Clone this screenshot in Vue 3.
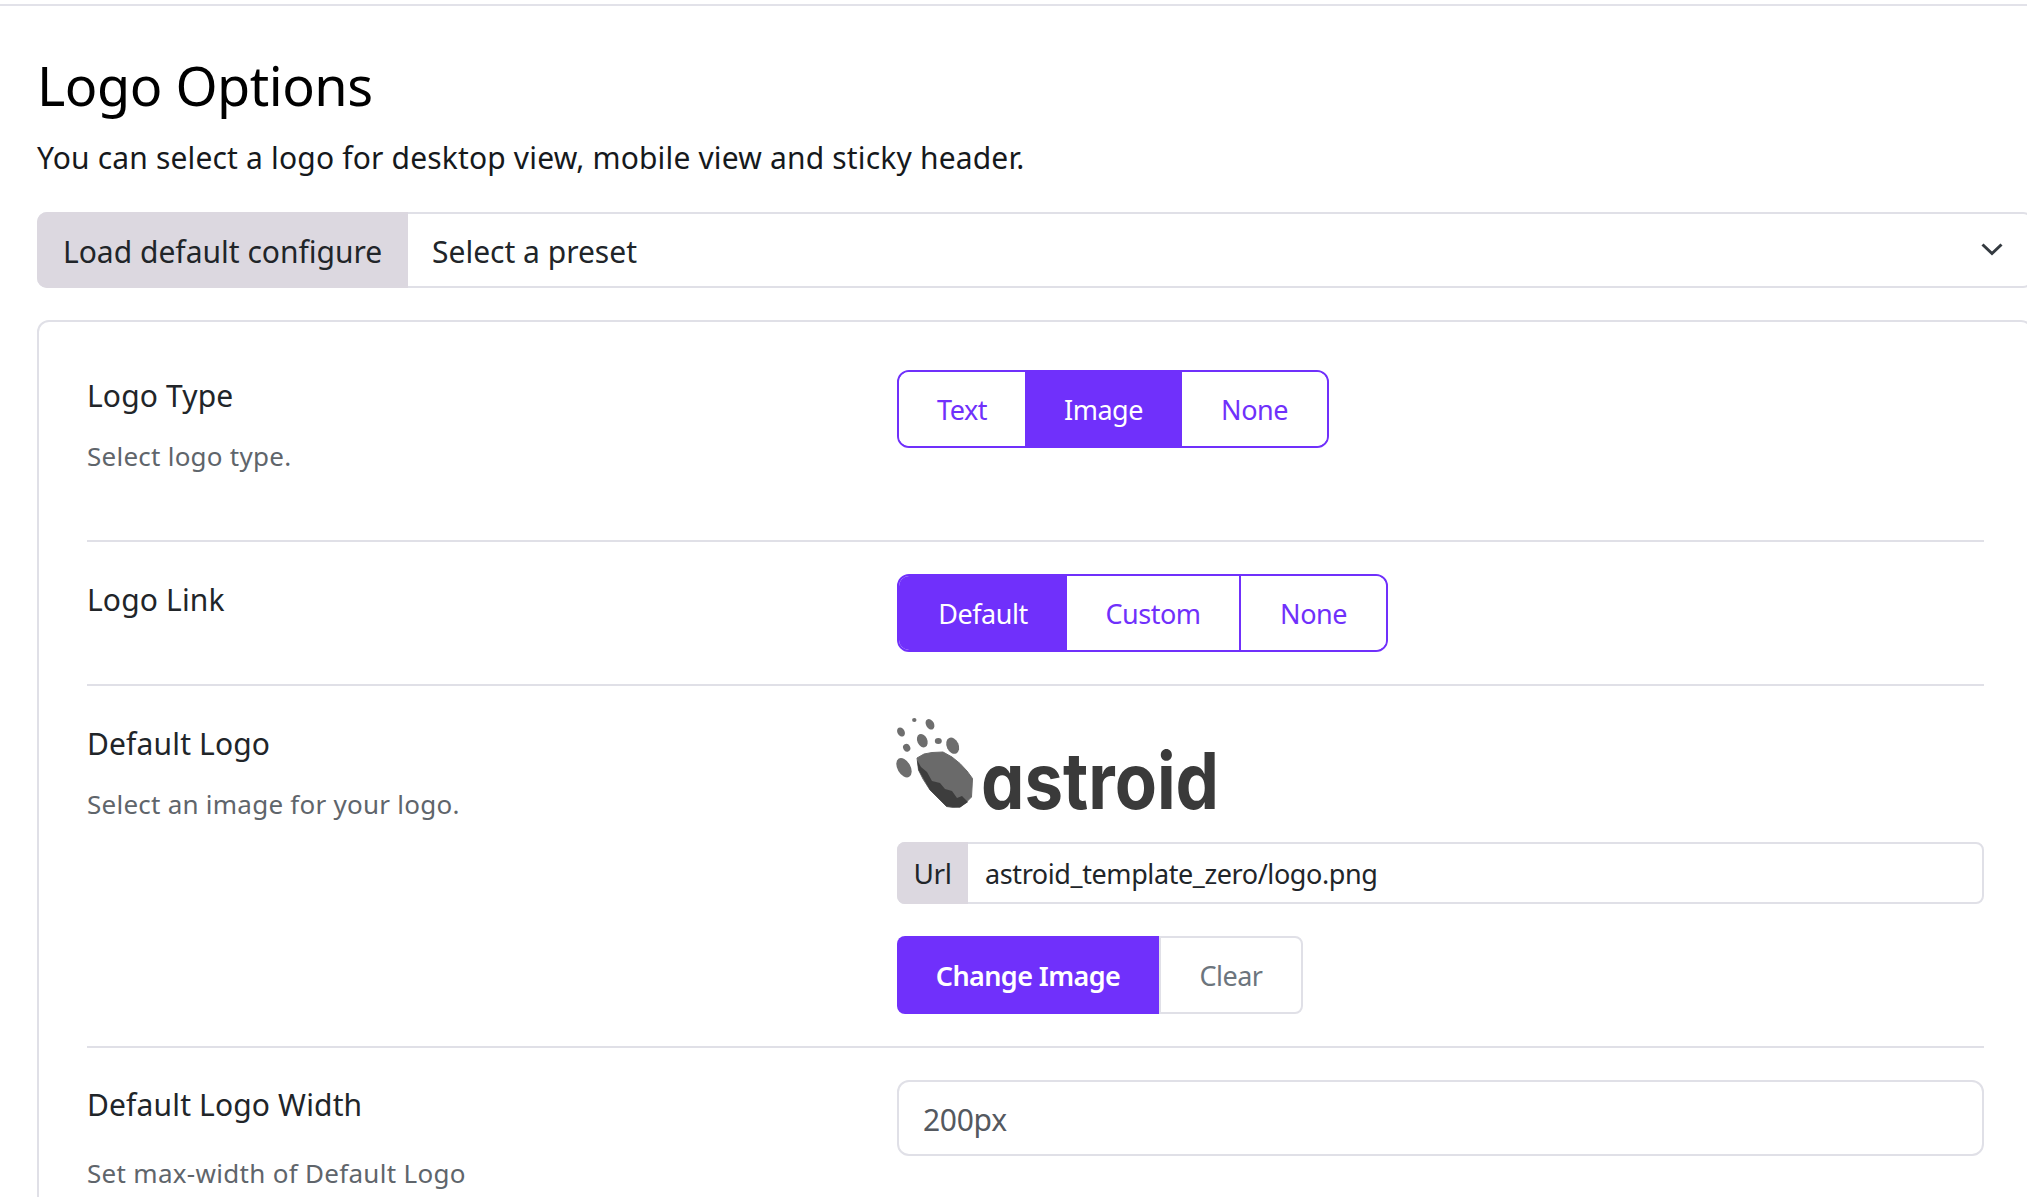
<script setup>
const typeOptions = [
  { label: 'Text', width: 126 },
  { label: 'Image', width: 157, active: true },
  { label: 'None', width: 145 },
]
const linkOptions = [
  { label: 'Default', width: 168, active: true },
  { label: 'Custom', width: 172 },
  { label: 'None', width: 147 },
]
</script>

<template>
  <div class="page">
    <h1 class="title">Logo Options</h1>
    <p class="subtitle">You can select a logo for desktop view, mobile view and sticky header.</p>

    <div class="preset">
      <span class="preset-label">Load default configure</span>
      <div class="preset-select">
        <span>Select a preset</span>
        <svg class="chevron" width="24" height="16" viewBox="0 0 24 16" fill="none">
          <path d="M2.5 3.5 12 12.5 21.5 3.5" stroke="#343a40" stroke-width="3" />
        </svg>
      </div>
    </div>

    <section class="card">
      <div class="row row-type">
        <div class="info">
          <h3 class="name">Logo Type</h3>
          <p class="desc">Select logo type.</p>
        </div>
        <div class="field">
          <div class="toggle">
            <button
              v-for="o in typeOptions"
              :key="o.label"
              class="toggle-btn"
              :class="{ on: o.active }"
              :style="{ width: o.width + 'px' }"
            >{{ o.label }}</button>
          </div>
        </div>
      </div>

      <div class="row row-link">
        <div class="info">
          <h3 class="name">Logo Link</h3>
        </div>
        <div class="field">
          <div class="toggle toggle-sep">
            <button
              v-for="o in linkOptions"
              :key="o.label"
              class="toggle-btn"
              :class="{ on: o.active }"
              :style="{ width: o.width + 'px' }"
            >{{ o.label }}</button>
          </div>
        </div>
      </div>

      <div class="row row-logo">
        <div class="info">
          <h3 class="name">Default Logo</h3>
          <p class="desc">Select an image for your logo.</p>
        </div>
        <div class="field">
          <svg class="logo" width="330" height="96" viewBox="0 0 330 96">
            <g class="logo-art">
              <g fill="#6e6e6e">
                <ellipse cx="5" cy="15" rx="3.6" ry="4.8" transform="rotate(-30 5 15)" />
                <ellipse cx="18.3" cy="3" rx="2.2" ry="2" />
                <ellipse cx="34" cy="7.3" rx="4" ry="5.6" transform="rotate(-30 34 7.3)" />
                <ellipse cx="26.3" cy="23.7" rx="5" ry="7" transform="rotate(-25 26.3 23.7)" />
                <ellipse cx="42.3" cy="24" rx="3.5" ry="3" />
                <ellipse cx="56.7" cy="28.7" rx="6" ry="8.5" transform="rotate(-25 56.7 28.7)" />
                <ellipse cx="10.7" cy="30.7" rx="3.5" ry="4" transform="rotate(-30 10.7 30.7)" />
                <ellipse cx="8" cy="50.7" rx="6.5" ry="10.5" transform="rotate(-30 8 50.7)" />
              </g>
              <path d="M28 37 36 35.5 47 35 56 40 64 46.5 71 54 76.5 61.5 76 71 75.5 80 70 85.5 64 90 57 90.5 50.5 89.5 42 81 34 73 27 62 22.5 53 21 41Z" fill="#6a6a6a" stroke="#6a6a6a" stroke-width="1" stroke-linejoin="round" />
              <path d="M21 43 22.5 53 34 73 50.5 89.5 64 90.5 72 85 66 79 61 81 56 74 49 72 44 66 36 64 31 55 25 50Z" fill="#3d3d3d" />
            </g>
            <text class="logo-text" x="85" y="92" textLength="238" lengthAdjust="spacingAndGlyphs">astroid</text>
          </svg>

          <div class="url">
            <span class="url-label">Url</span>
            <input class="url-input" value="astroid_template_zero/logo.png" />
          </div>

          <div class="actions">
            <button class="change">Change Image</button>
            <button class="clear">Clear</button>
          </div>
        </div>
      </div>

      <div class="row row-width">
        <div class="info">
          <h3 class="name">Default Logo Width</h3>
          <p class="desc desc-far">Set max-width of Default Logo</p>
        </div>
        <div class="field field-width">
          <input class="text-input" value="200px" />
        </div>
      </div>
    </section>
  </div>
</template>

<style scoped>
.page {
  box-sizing: border-box;
  width: 2027px;
  height: 1197px;
  overflow: hidden;
  padding: 4px 0 0 37px;
  position: relative;
  background: #fff;
  font-family: "Noto Sans", "Open Sans", sans-serif;
  color: #212529;
}
.page::before {
  content: "";
  position: absolute;
  left: 0;
  right: 0;
  top: 4px;
  height: 2px;
  background: #e2e2e9;
}
.title {
  margin: 44px 0 0;
  font-size: 54px;
  line-height: 74px;
  font-weight: 400;
  color: #000;
  letter-spacing: -0.5px;
}
.subtitle {
  margin: 14px 0 0;
  font-size: 30px;
  line-height: 44px;
  color: #16191c;
  letter-spacing: 0.17px;
}
.preset {
  display: flex;
  width: 1996px;
  height: 76px;
  margin-top: 32px;
  box-sizing: border-box;
  border: 2px solid #e0e0e7;
  border-radius: 10px;
}
.preset-label {
  width: 371px;
  flex: none;
  box-sizing: border-box;
  margin: -2px 0 -2px -2px;
  padding: 2px 0 0 26px;
  display: flex;
  align-items: center;
  background: #dcd8e0;
  border-radius: 10px 0 0 10px;
  font-size: 30px;
}
.preset-select {
  flex: 1;
  display: flex;
  align-items: center;
  padding: 2px 0 0 24px;
  font-size: 30px;
  position: relative;
}
.chevron {
  position: absolute;
  right: 27px;
  top: 27px;
}
.card {
  width: 1996px;
  min-height: 1000px;
  box-sizing: border-box;
  margin-top: 32px;
  padding: 0 47px 0 48px;
  border: 2px solid #e0e0e7;
  border-radius: 12px;
}
.row {
  display: grid;
  grid-template-columns: 810px 1fr;
  border-bottom: 2px solid #e0e0e7;
}
.row-type { height: 220px; padding-top: 48px; box-sizing: border-box; }
.row-link { height: 144px; padding-top: 32px; box-sizing: border-box; }
.row-logo { height: 362px; padding-top: 32px; box-sizing: border-box; }
.row-width { padding-top: 30px; border-bottom: 0; }
.name {
  margin: 2px 0 0;
  font-size: 30px;
  line-height: 48px;
  font-weight: 400;
  letter-spacing: 0.15px;
  color: #212529;
}
.desc {
  margin: 14px 0 0;
  font-size: 26px;
  line-height: 44px;
  color: #5f656b;
  letter-spacing: 0.25px;
}
.desc-far {
  margin-top: 23px;
}
.row-width .name {
  margin-top: 3px;
}
.row-width .desc-far {
  margin-top: 22px;
  letter-spacing: 0.3px;
}
.toggle {
  display: inline-flex;
  height: 78px;
  box-sizing: border-box;
  border: 2px solid #7030fb;
  border-radius: 12px;
  overflow: hidden;
}
.toggle-btn {
  border: 0;
  margin: 0;
  padding: 0;
  background: #fff;
  color: #7030fb;
  font: inherit;
  font-size: 27px;
  letter-spacing: -0.5px;
}
.toggle-btn.on {
  background: #7030fb;
  color: #fff;
}
.toggle-sep .toggle-btn + .toggle-btn + .toggle-btn {
  border-left: 2px solid #7030fb;
}
.logo {
  display: block;
  margin: -1px 0 0 -1px;
  overflow: visible;
}
.logo-art {
  filter: blur(0.5px);
}
.logo-text {
  font-family: "Inter", sans-serif;
  font-feature-settings: "cv11" 1;
  font-weight: 700;
  font-size: 78px;
  fill: #3a3a3a;
}
.url {
  display: flex;
  height: 62px;
  margin-top: 29px;
  box-sizing: border-box;
  border: 2px solid #e0e0e7;
  border-radius: 8px;
}
.url-label {
  width: 71px;
  flex: none;
  margin: -2px 0 -2px -2px;
  display: flex;
  align-items: center;
  justify-content: center;
  background: #dcd8e0;
  border-radius: 8px 0 0 8px;
  font-size: 28px;
  letter-spacing: -0.5px;
}
.url-input {
  flex: 1;
  min-width: 0;
  border: 0;
  outline: 0;
  padding: 0 0 0 17px;
  background: transparent;
  color: #212529;
  font: inherit;
  font-size: 27px;
  letter-spacing: -0.4px;
}
.actions {
  display: flex;
  height: 78px;
  margin-top: 32px;
}
.change {
  width: 262px;
  border: 0;
  border-radius: 8px 0 0 8px;
  background: #7030fb;
  color: #fff;
  font: inherit;
  font-size: 27px;
  font-weight: 600;
  letter-spacing: -0.6px;
}
.clear {
  width: 144px;
  border: 2px solid #e0e0e7;
  border-radius: 0 8px 8px 0;
  background: #fff;
  color: #6c757d;
  font: inherit;
  font-size: 27px;
  letter-spacing: -0.5px;
}
.field-width {
  padding-top: 2px;
}
.text-input {
  display: block;
  width: 100%;
  height: 76px;
  box-sizing: border-box;
  border: 2px solid #e0e0e7;
  border-radius: 12px;
  outline: 0;
  padding: 2px 0 0 24px;
  color: #55595f;
  font: inherit;
  font-size: 30px;
  letter-spacing: -0.3px;
}
</style>
